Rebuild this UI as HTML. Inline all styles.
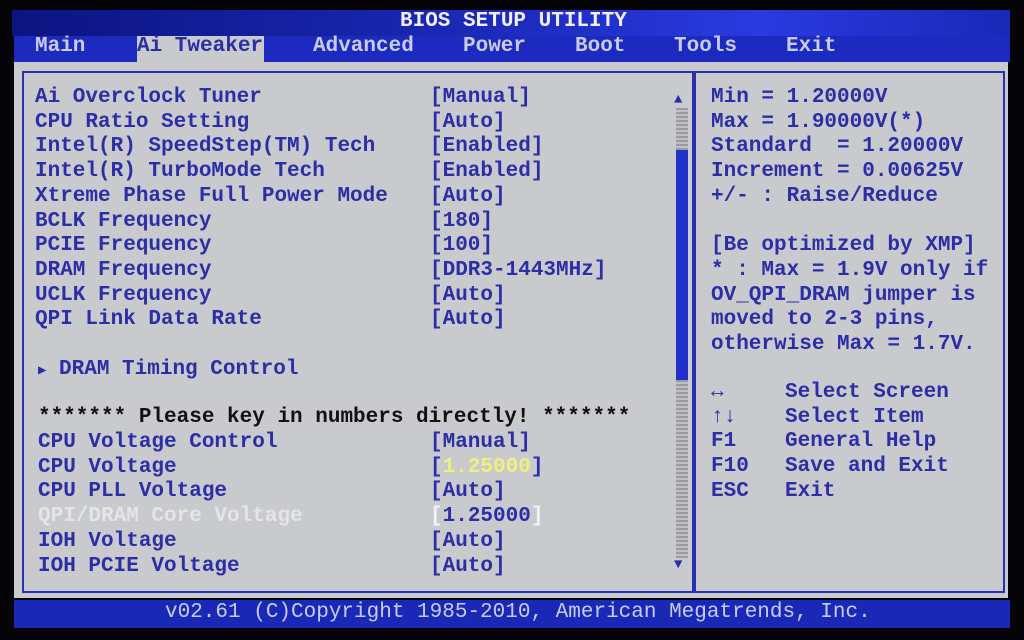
<!DOCTYPE html>
<html><head><meta charset="utf-8"><style>
*{margin:0;padding:0}
body{width:1024px;height:640px;background:#050508;position:relative;overflow:hidden;font-family:"Liberation Mono","DejaVu Sans Mono",monospace;font-weight:bold;font-size:21px}
.a{position:absolute;white-space:pre;line-height:24.7px}
#title{position:absolute;left:12px;top:10px;width:998px;height:26px;background:linear-gradient(90deg,#0c1480 0%,#1826b0 40%,#2a3ae0 75%,#1a28b8 100%)}
#menu{position:absolute;left:14px;top:36px;width:996px;height:26px;background:#1c2ac0}
#panel{position:absolute;left:14px;top:62px;width:994px;height:536px;background:#c9cacd}
#foot{position:absolute;left:14px;top:600px;width:996px;height:28px;background:#1a28b8}
.box{position:absolute;border:2px solid #2830b0}
.b{color:#2b2ea6}
.m{color:#c8cce8}
.w{color:#f0f0f4}
</style></head><body>
<div id="title"></div>
<div class="a w" style="left:400px;top:10px">BIOS SETUP UTILITY</div>
<div id="menu"></div>
<div style="position:absolute;left:137px;top:36px;width:127px;height:26px;background:#c9cacd"></div>
<div class="a m" style="left:35px;top:35px">Main</div>
<div class="a b" style="left:137px;top:35px">Ai Tweaker</div>
<div class="a m" style="left:313px;top:35px">Advanced</div>
<div class="a m" style="left:463px;top:35px">Power</div>
<div class="a m" style="left:575px;top:35px">Boot</div>
<div class="a m" style="left:674px;top:35px">Tools</div>
<div class="a m" style="left:786px;top:35px">Exit</div>
<div id="panel"></div>
<div class="box" style="left:22px;top:71px;width:670px;height:518px"></div>
<div class="box" style="left:692px;top:71px;width:309px;height:518px"></div>
<div style="position:absolute;left:676px;top:108px;width:12px;height:450px;background:repeating-linear-gradient(0deg,#9a9aa0 0 2px,#c0c0c4 2px 4px)"></div>
<div style="position:absolute;left:676px;top:150px;width:12px;height:230px;background:#2030c8"></div>
<div class="a b" style="left:674px;top:88px;font-size:14px">▲</div>
<div class="a b" style="left:674px;top:553px;font-size:14px">▼</div>
<div class="a b" style="left:35px;top:86px">Ai Overclock Tuner
CPU Ratio Setting
Intel(R) SpeedStep(TM) Tech
Intel(R) TurboMode Tech
Xtreme Phase Full Power Mode
BCLK Frequency
PCIE Frequency
DRAM Frequency
UCLK Frequency
QPI Link Data Rate</div>
<div class="a b" style="left:430px;top:86px">[Manual]
[Auto]
[Enabled]
[Enabled]
[Auto]
[180]
[100]
[DDR3-1443MHz]
[Auto]
[Auto]</div>
<div class="a b" style="left:38px;top:358px"><span style="font-size:14px">▶</span> DRAM Timing Control</div>
<div class="a" style="left:38px;top:406px;color:#111">******* Please key in numbers directly! *******</div>
<div class="a b" style="left:38px;top:431px">CPU Voltage Control
CPU Voltage
CPU PLL Voltage
<span style="color:#e4e4ec">QPI/DRAM Core Voltage</span>
IOH Voltage
IOH PCIE Voltage</div>
<div class="a b" style="left:430px;top:431px">[Manual]
[<span style="color:#f0f080">1.25000</span>]
[Auto]
<span style="color:#f4f4f8">[</span>1.25000<span style="color:#f4f4f8">]</span>
[Auto]
[Auto]</div>
<div class="a b" style="left:711px;top:86px">Min = 1.20000V
Max = 1.90000V(*)
Standard  = 1.20000V
Increment = 0.00625V
+/- : Raise/Reduce

[Be optimized by XMP]
* : Max = 1.9V only if
OV_QPI_DRAM jumper is
moved to 2-3 pins,
otherwise Max = 1.7V.</div>
<div class="a b" style="left:711px;top:381px">&#8596;
&#8593;&#8595;
F1
F10
ESC</div>
<div class="a b" style="left:785px;top:381px">Select Screen
Select Item
General Help
Save and Exit
Exit</div>
<div id="foot"></div>
<div class="a m" style="left:165px;top:601px;font-weight:normal;font-size:21px">v02.61 (C)Copyright 1985-2010, American Megatrends, Inc.</div>
</body></html>
